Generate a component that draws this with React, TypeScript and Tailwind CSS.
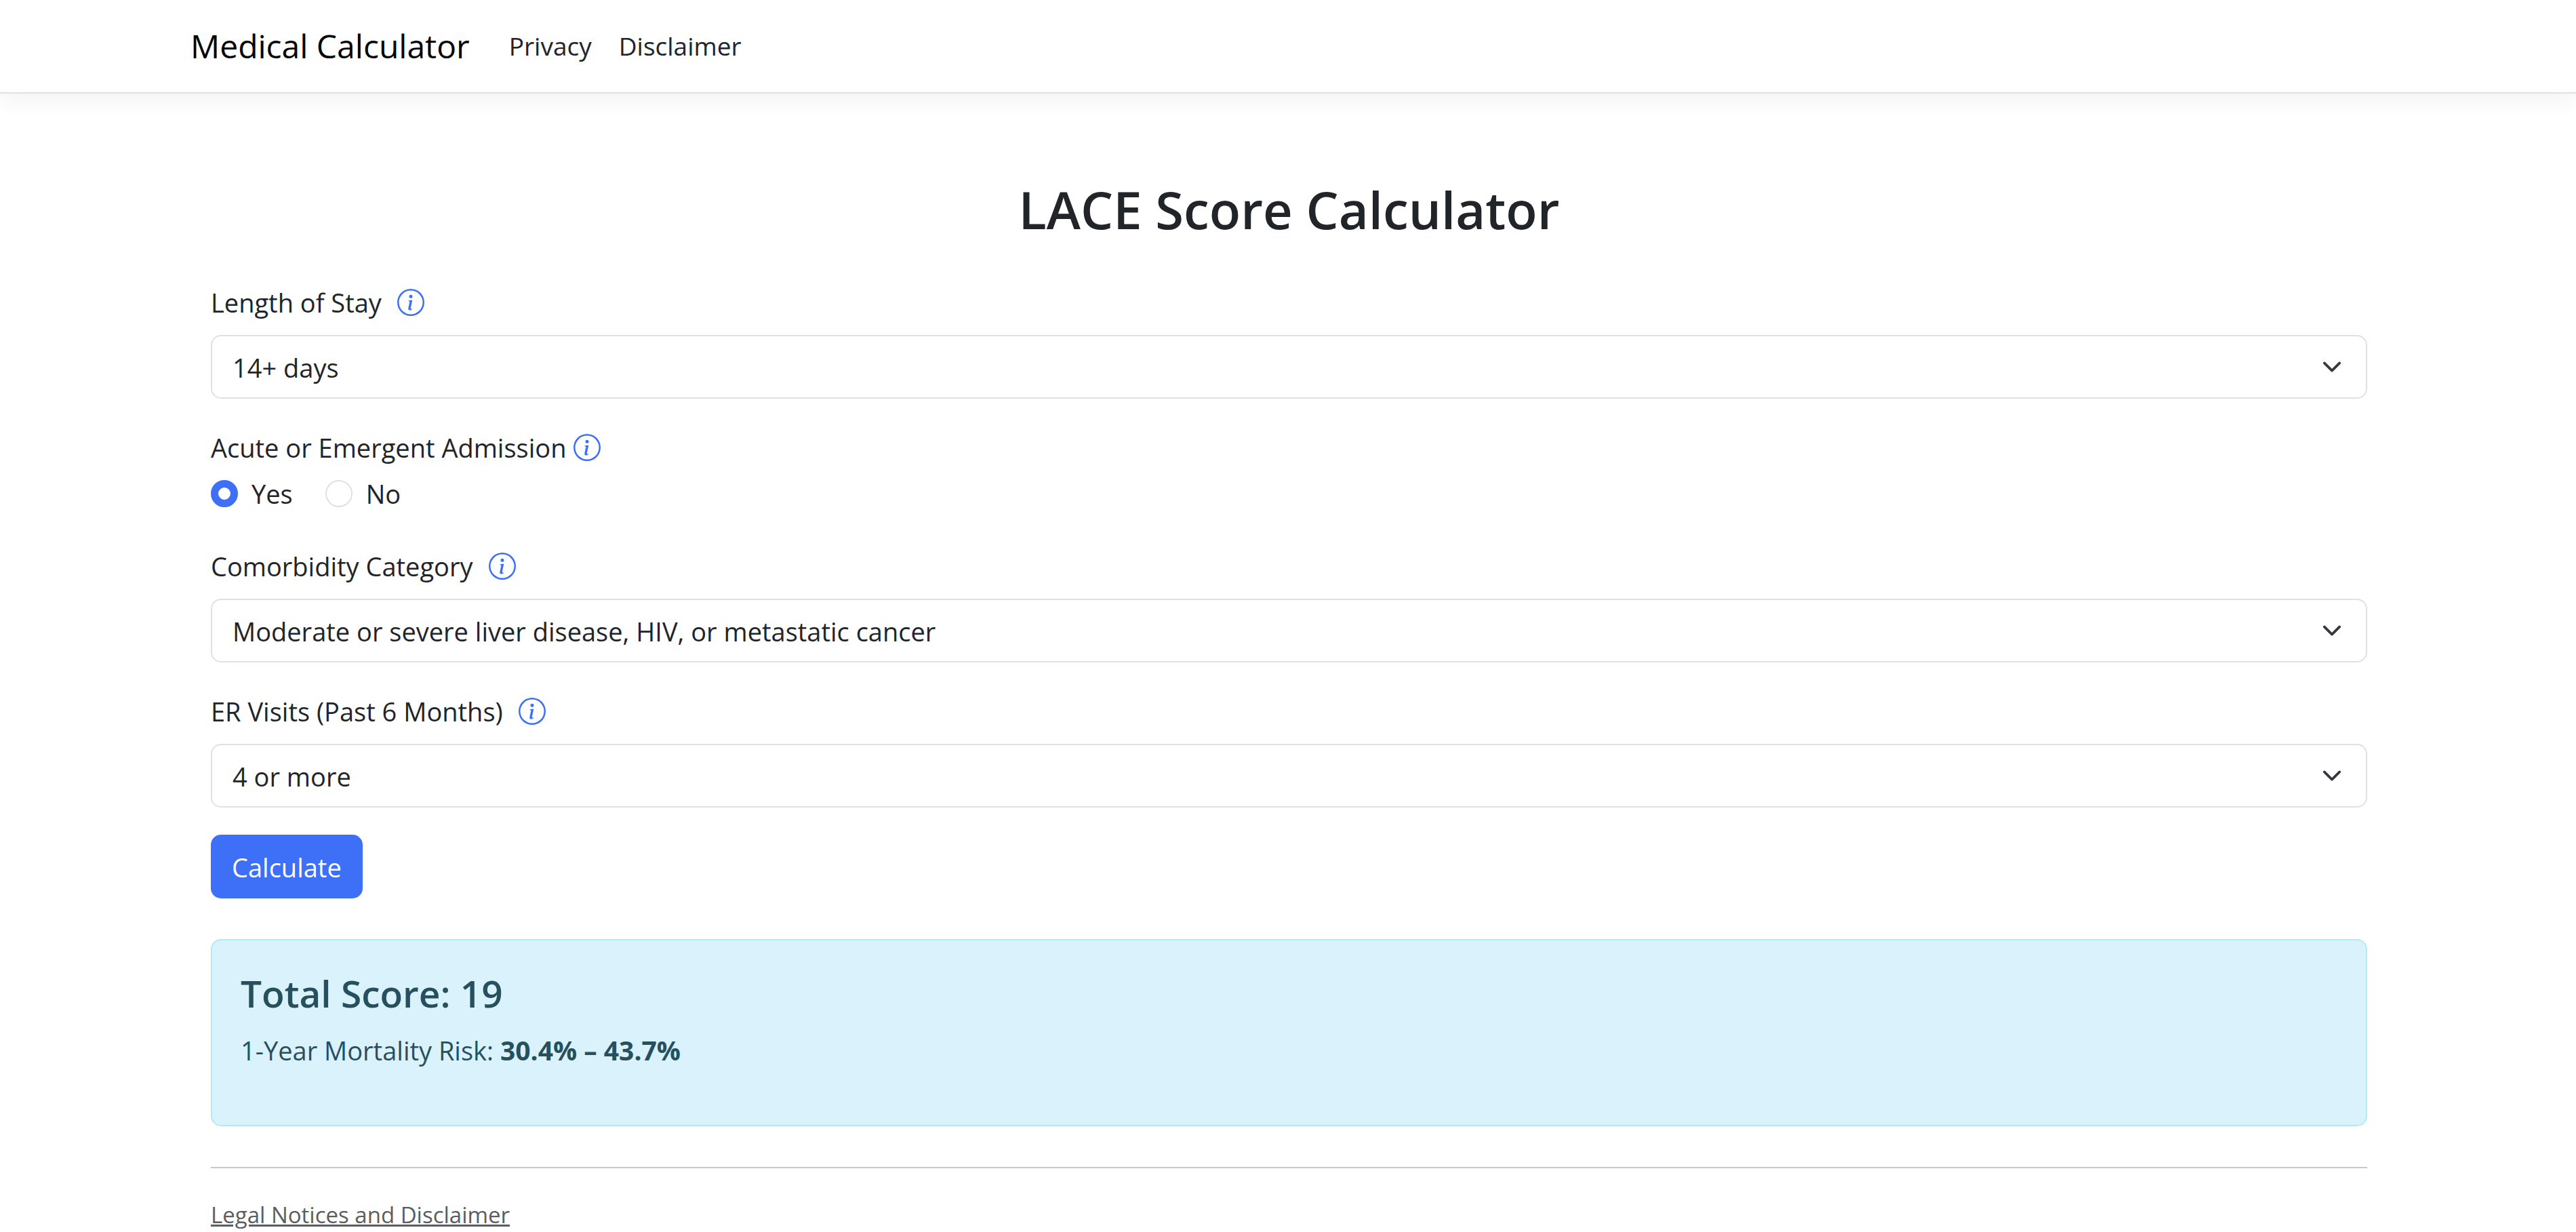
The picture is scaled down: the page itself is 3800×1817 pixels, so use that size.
import type { ReactNode } from "react";
import { BsInfoCircle } from "react-icons/bs";

function InfoButton({ topic }: { topic: string }) {
  return (
    <button type="button" aria-label={`About ${topic}`} className="cursor-pointer text-[#3d6ff7]">
      <BsInfoCircle className="size-[40px]" />
    </button>
  );
}

function SelectField({
  id,
  label,
  value,
  options,
}: {
  id: string;
  label: string;
  value: string;
  options: string[];
}) {
  return (
    <div className="mb-[40px]">
      <div className="mb-[16px] flex h-[64px] items-center gap-[23px]">
        <label htmlFor={id}>{label}</label>
        <InfoButton topic={label} />
      </div>
      <div className="relative">
        <select
          id={id}
          defaultValue={value}
          className="block h-[94px] w-full appearance-none rounded-[15px] border-2 border-[#dee2e6] bg-white pt-[2px] pr-[90px] pl-[30px] leading-[60px]"
        >
          {options.map((o) => (
            <option key={o}>{o}</option>
          ))}
        </select>
        <svg
          viewBox="0 0 16 16"
          aria-hidden="true"
          className="pointer-events-none absolute inset-y-0 right-[37px] my-auto size-[30px]"
        >
          <path
            d="m2 5 6 6 6-6"
            fill="none"
            stroke="#343a40"
            strokeWidth="2"
            strokeLinecap="round"
            strokeLinejoin="round"
          />
        </svg>
      </div>
    </div>
  );
}

function RadioOption({ id, checked, children }: { id: string; checked?: boolean; children: ReactNode }) {
  return (
    <div className="flex h-[60px] items-center gap-[20px]">
      <input
        type="radio"
        id={id}
        name="admission"
        defaultChecked={checked}
        className="size-[40px] appearance-none rounded-full border-2 border-[#dee2e6] bg-white checked:border-[11px] checked:border-[#3d6ff7]"
      />
      <label htmlFor={id}>{children}</label>
    </div>
  );
}

export default function App() {
  return (
    <div className="bg-white font-['Open_Sans',sans-serif] text-[38px] leading-[60px] text-[#212529]">
      <header className="border-b-2 border-[#dee2e6] bg-white shadow-[0_10px_30px_rgba(0,0,0,0.05)]">
        <nav className="mx-auto flex h-[136px] max-w-[3300px] items-center px-[31px]">
          <a href="#" className="mr-[58px] text-[48px] text-black">
            Medical Calculator
          </a>
          <div className="flex gap-[40px] text-[37px]">
            <a href="#privacy">Privacy</a>
            <a href="#disclaimer">Disclaimer</a>
          </div>
        </nav>
      </header>

      <main className="mx-auto max-w-[3300px] pt-[120px] pr-[58px] pl-[61px]">
        <h1 className="mb-[54px] text-center text-[76px] leading-[102px] font-semibold">
          LACE Score Calculator
        </h1>

        <form onSubmit={(e) => e.preventDefault()}>
          <SelectField
            id="stay"
            label="Length of Stay"
            value="14+ days"
            options={["Less than 1 day", "1 day", "2 days", "3 days", "4-6 days", "7-13 days", "14+ days"]}
          />

          <fieldset className="mb-[45px]">
            <legend className="mb-[6px] flex h-[64px] items-center gap-[11px]">
              Acute or Emergent Admission
              <InfoButton topic="Acute or Emergent Admission" />
            </legend>
            <div className="flex gap-[48px]">
              <RadioOption id="admission-yes" checked>
                Yes
              </RadioOption>
              <RadioOption id="admission-no">No</RadioOption>
            </div>
          </fieldset>

          <SelectField
            id="comorbidity"
            label="Comorbidity Category"
            value="Moderate or severe liver disease, HIV, or metastatic cancer"
            options={["None", "Moderate or severe liver disease, HIV, or metastatic cancer"]}
          />
          <SelectField
            id="visits"
            label="ER Visits (Past 6 Months)"
            value="4 or more"
            options={["0", "1", "2", "3", "4 or more"]}
          />

          <button
            type="submit"
            className="block h-[94px] cursor-pointer rounded-[15px] bg-[#3d6ff7] px-[31px] pt-[2px] text-white"
          >
            Calculate
          </button>
        </form>

        <section
          aria-live="polite"
          className="mt-[60px] rounded-[15px] border-2 border-[#b4e9f6] bg-[#d9f2fc] px-[42px] pt-[40px] pb-[80px] text-[#27505f]"
        >
          <h2 className="mb-[16px] text-[55px] leading-[76px] font-semibold">Total Score: 19</h2>
          <p>
            1-Year Mortality Risk: <strong className="text-[39px] font-bold">30.4% – 43.7%</strong>
          </p>
        </section>

        <hr className="mt-[60px] mb-[40px] border-t-2 border-[#c7c8c9]" />

        <footer className="leading-[52px]">
          <a href="#legal" className="text-[33px] text-[#5a5e62] underline">
            Legal Notices and Disclaimer
          </a>
        </footer>
      </main>
    </div>
  );
}
